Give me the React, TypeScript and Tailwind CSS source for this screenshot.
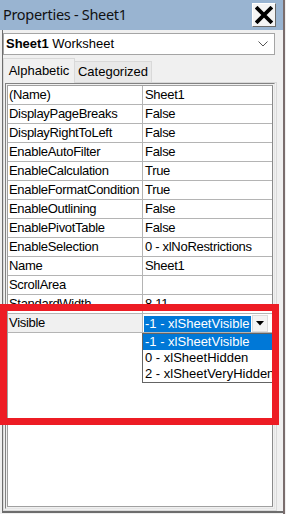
import React from 'react';

const rows: [string, string][] = [
  ['(Name)', 'Sheet1'],
  ['DisplayPageBreaks', 'False'],
  ['DisplayRightToLeft', 'False'],
  ['EnableAutoFilter', 'False'],
  ['EnableCalculation', 'True'],
  ['EnableFormatCondition', 'True'],
  ['EnableOutlining', 'False'],
  ['EnablePivotTable', 'False'],
  ['EnableSelection', '0 - xlNoRestrictions'],
  ['Name', 'Sheet1'],
  ['ScrollArea', ''],
  ['StandardWidth', '8.11'],
];

const options = ['-1 - xlSheetVisible', '0 - xlSheetHidden', '2 - xlSheetVeryHidden'];

export default function App() {
  return (
    <div className="relative w-[286px] h-[514px] bg-[#f0f0f0] overflow-hidden font-['Liberation_Sans',Arial,sans-serif] text-[13px] tracking-[-0.3px] text-black">
      <div className="w-[285px] h-[514px] border-r-2 border-[#7a6d6d] flex flex-col">
        {/* title bar */}
        <div className="h-[30px] bg-[#99b4d1] flex items-start justify-between shrink-0">
          <span className="pl-[3px] pt-[3px] text-[14.5px] leading-[22px] tracking-[-0.3px] font-['Noto_Sans',sans-serif] text-[#111]">
            Properties - Sheet1
          </span>
          <div className="mt-[3px] mr-[7px] w-[24px] h-[24px] bg-[#f4f4f4] border border-[#fff] border-r-[#6b6b6b] border-b-[#6b6b6b] flex items-center justify-center">
            <svg width="18" height="18" viewBox="0 0 18 18">
              <path d="M2.5 2.5 L15.5 15.5 M15.5 2.5 L2.5 15.5" stroke="#000" strokeWidth="3.8" strokeLinecap="square" />
            </svg>
          </div>
        </div>

        {/* lower area */}
        <div className="flex-1 ml-[2px] border-l border-b-2 border-[#6d6d6d] flex flex-col mb-[1px]">
          {/* object combo */}
          <div className="mt-[3px] w-[272px] h-[22px] bg-white border border-[#a5a5a5] flex items-center justify-between pl-[2px] pr-[6px] shrink-0">
            <span className="whitespace-nowrap tracking-normal">
              <b className="font-bold">Sheet1</b> Worksheet
            </span>
            <svg width="10" height="6" viewBox="0 0 10 6">
              <path d="M0.5 0.5 L5 5 L9.5 0.5" fill="none" stroke="#555" strokeWidth="1" />
            </svg>
          </div>

          {/* tabs */}
          <div className="h-[27px] flex items-end shrink-0">
            <div className="h-[25px] w-[72px] bg-[#f0f0f0] border border-b-0 border-[#d9d9d9] flex items-center justify-center relative z-10 -mb-[1px] tracking-normal">
              Alphabetic
            </div>
            <div className="h-[21px] w-[77px] bg-[#e9e9e9] border border-l-0 border-b-0 border-[#d9d9d9] flex items-center justify-center tracking-normal">
              Categorized
            </div>
          </div>

          {/* tab panel */}
          <div className="flex-1 w-[274px] border border-[#d9d9d9] pl-[1px] pr-[1px] pb-[1px] flex flex-col">
            <div className="flex-1 border border-[#828282] border-r-[#e6e6e6] border-b-[#e6e6e6] p-[1px] flex flex-col">
              <div className="flex-1 bg-white border border-[#a0a0a0] border-r-[#8a8a8a] flex flex-col">
                {rows.map(([name, value]) => (
                  <div key={name} className="h-[19px] flex border-b border-[#b4b4b4] shrink-0">
                    <div className="w-[135px] border-r border-[#b4b4b4] pl-[1px] leading-[18px] whitespace-nowrap overflow-hidden">
                      {name}
                    </div>
                    <div className="flex-1 pl-[2px] leading-[18px] whitespace-nowrap overflow-hidden">{value}</div>
                  </div>
                ))}
                {/* Visible row with open dropdown */}
                <div className="h-[19px] flex border-b border-[#b4b4b4] shrink-0 relative">
                  <div className="w-[135px] bg-[#f0f0f0] border-r border-[#b4b4b4] pl-[1px] leading-[18px]">Visible</div>
                  <div className="flex-1 flex items-center pl-[1px] pt-[1px]">
                    <div className="w-[107px] h-[16px] bg-[#0078d7] text-white leading-[16px] pl-[1px] whitespace-nowrap overflow-hidden tracking-normal">
                      -1 - xlSheetVisible
                    </div>
                    <div className="ml-[1px] w-[16px] h-[17px] bg-[#f4f4f4] border border-[#dcdcdc] flex items-center justify-center">
                      <svg width="8" height="5" viewBox="0 0 8 5">
                        <path d="M0 0 H8 L4 4.5 Z" fill="#000" />
                      </svg>
                    </div>
                  </div>
                  <div className="absolute top-[19px] left-[134px] w-[133px] bg-white border border-[#646464] z-10 overflow-hidden tracking-normal">
                    {options.map((o, i) => (
                      <div
                        key={o}
                        className={`h-[16px] leading-[16px] pl-[2px] whitespace-nowrap ${i === 0 ? 'bg-[#0078d7] text-white' : ''}`}
                      >
                        {o}
                      </div>
                    ))}
                  </div>
                </div>
              </div>
            </div>
          </div>
        </div>
      </div>

      {/* red annotation box */}
      <div className="absolute top-[304px] left-0 w-[279px] h-[121px] border-[7px] border-[#ed1c24] pointer-events-none z-20" />
    </div>
  );
}
